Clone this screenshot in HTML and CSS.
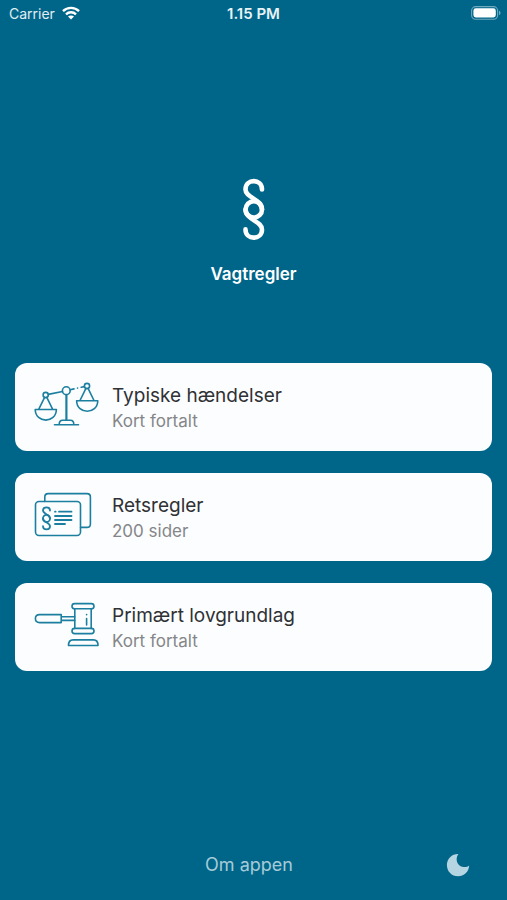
FILE: index.html
```html
<!DOCTYPE html>
<html lang="da">
<head>
<meta charset="utf-8">
<meta name="viewport" content="width=device-width, initial-scale=1">
<title>Vagtregler</title>
<link rel="stylesheet" href="styles.css">
</head>
<body>
<div class="app">
  <header class="status">
    <div class="carrier">
      <span>Carrier</span>
      <svg width="18" height="14" viewBox="0 0 18 14" fill="none" stroke="currentColor" stroke-width="2.4" aria-hidden="true">
        <path d="M1 5.2C5.4.8 12.6.8 17 5.2"/>
        <path d="M4 8.3C6.8 5.6 11.2 5.6 14 8.3"/>
        <path d="M9 13.6L6 10.6C7.6 9 10.4 9 12 10.6Z" fill="currentColor" stroke="none"/>
      </svg>
    </div>
    <div class="clock">1.15 PM</div>
    <div class="battery">
      <svg width="30" height="14" viewBox="0 0 30 14" aria-hidden="true">
        <rect x=".6" y=".6" width="26" height="12.6" rx="4" fill="none" stroke="#6fa9be" stroke-width="1.1"/>
        <rect x="2.4" y="2.3" width="22.4" height="9.2" rx="2.4" fill="#fff"/>
        <path d="M28 4.7C30 5.4 30 8.4 28 9.1Z" fill="#6fa9be"/>
      </svg>
    </div>
  </header>

  <main>
    <div class="brand">
      <svg width="24" height="64" viewBox="0 0 24 64" fill="none" stroke="currentColor" stroke-width="4.6" stroke-linecap="round" aria-hidden="true">
        <path d="M20 11.4C20 .4 3.5.4 3.5 11.4C3.5 20 20 21 20 31.4"/>
        <path d="M3.5 51.4C3.5 62.4 20 62.4 20 51.4C20 43 3.5 41.8 3.5 31.4"/>
        <circle cx="11.8" cy="31.4" r="8.2"/>
      </svg>
      <h1>Vagtregler</h1>
    </div>

    <nav class="cards">
      <a class="card" href="#haendelser">
        <svg class="icon" width="66" height="48" viewBox="0 0 66 48" aria-hidden="true">
          <circle cx="11.7" cy="14" r="2.6"/>
          <circle cx="32.3" cy="9.7" r="3.9"/>
          <circle cx="53" cy="5" r="2.6"/>
          <path d="M14.3 13.4L28.5 10.5M36.2 8.8L40 7.9M43.5 7.1H43.6M47.2 6.3L50.4 5.6"/>
          <path d="M10.6 16.4L4.7 28.3M12.8 16.4L18.7 28.3M1.2 28.5H22.4C22 42.6 1.6 42.6 1.2 28.5Z"/>
          <path d="M51.9 7.4L46 19.5M54.1 7.4L60 19.5M42.6 19.7H63.8C63.4 33.8 43 33.8 42.6 19.7Z"/>
          <path d="M32.4 13.6V39" stroke-width="2.2" stroke-linecap="butt"/>
          <path d="M20.5 43.8H44.5M25.2 43.6C25.2 40.8 26.3 39.3 28.5 39.3H36.5C38.7 39.3 39.8 40.8 39.8 43.6"/>
        </svg>
        <span class="text"><span class="title">Typiske hændelser</span><span class="sub">Kort fortalt</span></span>
      </a>
      <a class="card" href="#retsregler">
        <svg class="icon" width="66" height="48" viewBox="0 0 66 48" aria-hidden="true">
          <path d="M10.8 10.4V6C10.8 3.8 12 2.6 14.2 2.6H53C55.2 2.6 56.4 3.8 56.4 6V33C56.4 35.2 55.2 36.4 53 36.4H46.6"/>
          <rect x="1.5" y="10.5" width="45" height="34" rx="3.4"/>
          <g stroke-width="1.8">
            <path d="M16 19.6C16 15.4 9 15.4 9 19.6C9 23 16 23.5 16 27.4"/>
            <path d="M9 35.2C9 39.4 16 39.4 16 35.2C16 31.8 9 31.3 9 27.4"/>
            <circle cx="12.5" cy="27.4" r="3.5"/>
            <path d="M21 20.7H21.6M25 20.7H37.5M21 25H37.5M21 29H37.5M21 33H31"/>
          </g>
        </svg>
        <span class="text"><span class="title">Retsregler</span><span class="sub">200 sider</span></span>
      </a>
      <a class="card" href="#lovgrundlag">
        <svg class="icon" width="66" height="48" viewBox="0 0 66 48" aria-hidden="true">
          <path d="M27.2 13.6H5.6C0 13.6 0 21.6 5.6 21.6H27.2ZM27.2 15.8H40.7M27.2 19.4H40.7"/>
          <rect x="38" y="2.6" width="22" height="5.2" rx="2.6"/>
          <rect x="38" y="27.4" width="22" height="5.2" rx="2.6"/>
          <path d="M40.8 7.8V27.4M57.2 7.8V27.4M52.6 13.6V13.7M52.6 17.6V24"/>
          <path d="M34.5 44.5C34.5 40.8 36 38.9 39 38.9H59.5C62.5 38.9 64 40.8 64 44.5Z"/>
        </svg>
        <span class="text"><span class="title">Primært lovgrundlag</span><span class="sub">Kort fortalt</span></span>
      </a>
    </nav>
  </main>

  <footer>
    <a class="about" href="#om">Om appen</a>
    <button class="theme" type="button" aria-label="Mørk tilstand">
      <svg width="24" height="24" viewBox="0 0 24 24" aria-hidden="true">
        <path d="M12.4 1C6 .8.9 5.7.9 12C.9 18.5 5.8 23.3 12 23.3C18 23.3 22.8 19 23.2 12.5C21.5 14 19.5 14.3 17.3 14C11.5 13.2 8.5 6.5 12.4 1Z" fill="currentColor"/>
      </svg>
    </button>
  </footer>
</div>
</body>
</html>
```
FILE: styles.css
```css
* {
  box-sizing: border-box;
}

body {
  margin: 0;
  background: #006689;
  color: #fff;
  font-family: Inter, "Liberation Sans", sans-serif;
}

.app {
  display: flex;
  flex-direction: column;
  min-height: 100vh;
}

.status {
  display: grid;
  grid-template-columns: 1fr auto 1fr;
  align-items: center;
  height: 26px;
  padding: 0 6px;
  font-size: 14px;
}

.carrier {
  display: flex;
  align-items: center;
  gap: 7px;
  padding-left: 3px;
  color: #e0eef3;
}

.carrier svg {
  color: #fff;
}

.clock {
  font-size: 15px;
  font-weight: 600;
  color: #e8f3f6;
}

.battery {
  display: flex;
  justify-content: flex-end;
}

main {
  flex: 1;
}

.brand {
  display: flex;
  flex-direction: column;
  align-items: center;
  gap: 20px;
  padding-top: 152px;
}

h1 {
  margin: 0;
  font-size: 17px;
  font-weight: 600;
  line-height: 24px;
}

.cards {
  display: flex;
  flex-direction: column;
  gap: 22px;
  padding: 77px 15px 0;
}

.card {
  display: flex;
  align-items: flex-start;
  gap: 12px;
  min-height: 88px;
  padding: 18px 19px;
  border-radius: 12px;
  background: #fbfdff;
  text-decoration: none;
}

.icon {
  flex: none;
  fill: none;
  stroke: #1c7fa0;
  stroke-width: 1.6;
  stroke-linecap: round;
  stroke-linejoin: round;
}

.text {
  display: flex;
  flex-direction: column;
  padding-top: 2px;
}

.title {
  color: #303134;
  font-size: 19px;
  line-height: 26px;
}

.sub {
  color: #858689;
  font-size: 17px;
  line-height: 24px;
}

footer {
  display: grid;
  grid-template-columns: 1fr auto 1fr;
  align-items: center;
  padding: 0 37px 22px 28px;
}

.about {
  grid-column: 2;
  color: #a6cbd8;
  font-size: 18px;
  line-height: 26px;
  text-decoration: none;
}

.theme {
  display: flex;
  justify-self: end;
  padding: 0;
  border: 0;
  background: none;
  color: #b5d5e2;
}
```
